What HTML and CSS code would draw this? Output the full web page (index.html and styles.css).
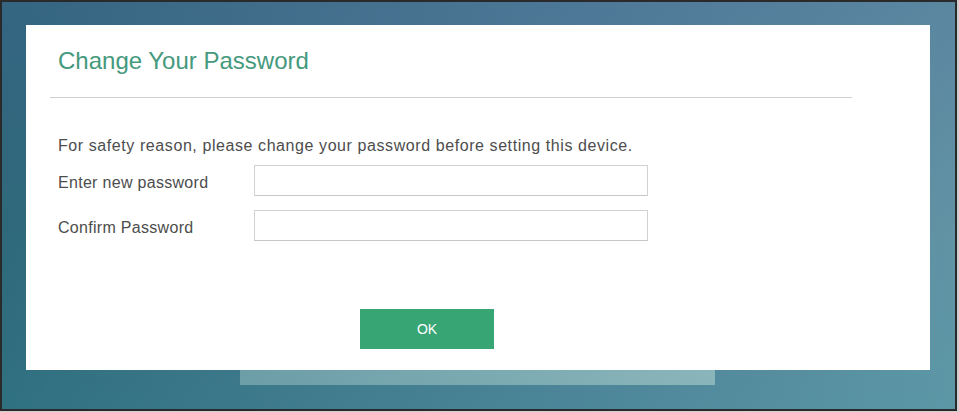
FILE: index.html
```html
<!DOCTYPE html>
<html lang="en">
<head>
<meta charset="utf-8">
<title>Change Your Password</title>
<link rel="stylesheet" href="styles.css">
</head>
<body>
<div class="frame">
  <div class="panel">
    <div class="header">
      <h1 class="title">Change Your Password</h1>
    </div>
    <div class="content">
      <p class="intro">For safety reason, please change your password before setting this device.</p>
      <div class="row row-first">
        <label class="label" for="pw1">Enter new password</label>
        <input class="field" id="pw1" type="password">
      </div>
      <div class="row row-second">
        <label class="label" for="pw2">Confirm Password</label>
        <input class="field" id="pw2" type="password">
      </div>
      <button class="ok" type="button">OK</button>
    </div>
  </div>
  <div class="strip"></div>
</div>
</body>
</html>
```

FILE: styles.css
```css
html, body {
  margin: 0;
  padding: 0;
}
body {
  background: #cfcfcf;
  width: 959px;
  height: 412px;
  font-family: "Liberation Sans", Arial, sans-serif;
}
.frame {
  box-sizing: border-box;
  width: 957px;
  height: 411px;
  border: 2px solid #2a2a2a;
  padding: 23px 0 0 24px;
  background:
    linear-gradient(to bottom, rgba(70, 90, 150, 0.22), rgba(70, 90, 150, 0) 55%, rgba(50, 190, 180, 0.10)),
    linear-gradient(to right, #2f687b, #4f7f96 60%, #6193a4);
}
.panel {
  box-sizing: border-box;
  width: 904px;
  height: 345px;
  background: #ffffff;
  padding: 0 78px 0 24px;
}
.header {
  padding: 22px 0 22px 8px;
  border-bottom: 1px solid #cfcfcf;
}
.title {
  margin: 0;
  font-size: 24px;
  line-height: 28px;
  font-weight: normal;
  color: #45997d;
}
.content {
  padding-left: 8px;
}
.intro {
  margin: 38px 0 0 0;
  font-size: 16px;
  line-height: 20px;
  letter-spacing: 0.58px;
  color: #4d4d4d;
}
.row {
  display: flex;
  align-items: center;
}
.row-first {
  margin-top: 9px;
}
.row-second {
  margin-top: 14px;
}
.label {
  width: 196px;
  font-size: 16px;
  line-height: 20px;
  letter-spacing: 0.3px;
  color: #4d4d4d;
  padding-top: 4px;
}
.field {
  box-sizing: border-box;
  width: 394px;
  height: 31px;
  margin: 0;
  border: 1px solid #d2d2d2;
  border-bottom-color: #c6c6c6;
  background: #fff;
  outline: none;
}
.ok {
  display: block;
  margin: 68px 0 0 302px;
  width: 134px;
  height: 40px;
  border: 0;
  background: #37a574;
  color: #ffffff;
  font-family: "Liberation Sans", Arial, sans-serif;
  font-size: 14px;
  padding: 0;
}
.strip {
  margin-left: 214px;
  width: 475px;
  height: 15px;
  background: linear-gradient(to right, #6c9ea8, #8ab5ba);
}
```
